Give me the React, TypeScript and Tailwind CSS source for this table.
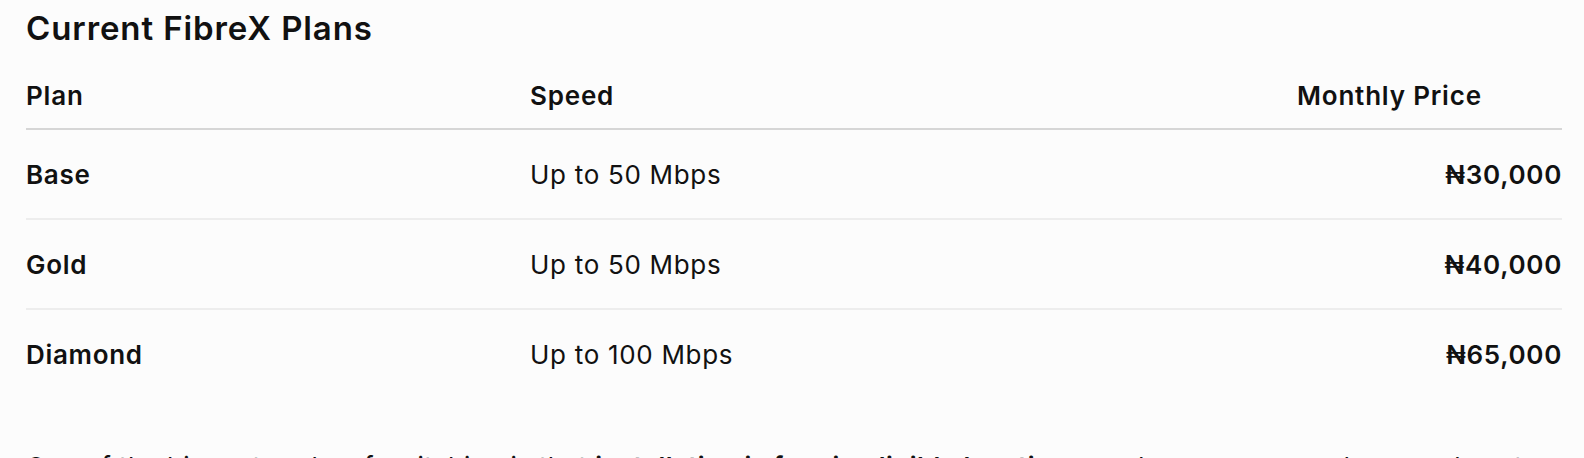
const plans = [
  { name: "Base", speed: "Up to 50 Mbps", price: "₦30,000" },
  { name: "Gold", speed: "Up to 50 Mbps", price: "₦40,000" },
  { name: "Diamond", speed: "Up to 100 Mbps", price: "₦65,000" },
]

export default function App() {
  return (
    <div className="min-h-[458px] w-full overflow-hidden bg-[#fcfcfc] px-[26px] pt-[8px] text-[#111111] font-['Inter','Noto_Sans',sans-serif]">
      <h2 className="text-[33px] font-semibold leading-[40px] tracking-[0.9px]">Current FibreX Plans</h2>

      <div className="mt-[28px] w-[1536px]">
        <div className="grid grid-cols-[504px_767px_265px] border-b-2 border-[#d6d6d6] pb-[13px] text-[26px] font-semibold leading-[39px] tracking-[0.8px]">
          <div>Plan</div>
          <div>Speed</div>
          <div>Monthly Price</div>
        </div>

        {plans.map((plan, i) => (
          <div
            key={plan.name}
            className={
              "grid grid-cols-[504px_767px_265px] pt-[25px] pb-[24px] text-[26px] leading-[39px] tracking-[0.7px] " +
              (i < plans.length - 1 ? "border-b-2 border-[#ededed]" : "")
            }
          >
            <div className="font-semibold">{plan.name}</div>
            <div>{plan.speed}</div>
            <div className="text-right font-semibold">{plan.price}</div>
          </div>
        ))}
      </div>

      <p className="mt-[49px] whitespace-nowrap text-[26px] leading-[39px] tracking-[0.4px]">
        One of the biggest perks of switching is that <strong className="font-semibold">installation is free in eligible locations</strong>, and you can upgrade your plan at any time.
      </p>
    </div>
  )
}
